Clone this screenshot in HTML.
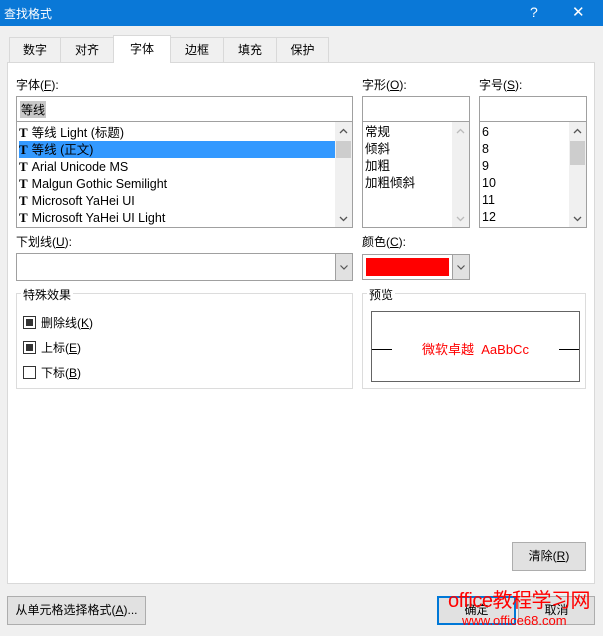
<!DOCTYPE html><html><head><meta charset="utf-8"><style>
*{margin:0;padding:0;box-sizing:border-box}
body{width:603px;height:636px;background:#f0f0f0;position:relative;overflow:hidden;font-family:"Liberation Sans","Microsoft YaHei","Noto Sans CJK SC",sans-serif;font-size:12px;color:#000}
.a{position:absolute}
.tab{position:absolute;top:37px;height:25px;border:1px solid #d9d9d9;border-bottom:none;background:#f0f0f0;text-align:center;line-height:24px}
.box{position:absolute;background:#fff;border:1px solid #a0a0a0}
.row{position:absolute;left:2px;height:17px;line-height:17px;white-space:nowrap;font-size:12.5px}
.T{font-family:"Liberation Serif",serif;font-weight:bold;font-size:13px;margin-right:4px}
.sb{position:absolute;background:#f0f0f0;width:17px}
.btn{position:absolute;background:#e1e1e1;border:1px solid #adadad;text-align:center;line-height:26px}
.cb{position:absolute;width:13px;height:13px;border:1px solid #333;background:#fff}
.cb.on::after{content:"";position:absolute;left:2px;top:2px;width:7px;height:7px;background:#333}
.grp{position:absolute;border:1px solid #dcdcdc}
.lg{position:absolute;background:#fff;padding:0 2px;top:-8px;left:4px}
u{text-decoration:underline}
svg{position:absolute}
</style></head><body>
<div class="a" style="left:0;top:0;width:603px;height:26px;background:#0a78d7;color:#fff"><span class="a" style="left:4px;top:5px;font-size:12px">查找格式</span><span class="a" style="left:530px;top:4px;font-size:14px">?</span><span class="a" style="left:572px;top:3px;font-size:15px">✕</span></div>
<div class="a" style="left:7px;top:62px;width:588px;height:522px;background:#fff;border:1px solid #d9d9d9"></div>
<div class="tab" style="left:9px;width:52px">数字</div>
<div class="tab" style="left:60px;width:54px">对齐</div>
<div class="tab" style="left:113px;width:58px;top:35px;height:28px;background:#fff;line-height:26px">字体</div>
<div class="tab" style="left:170px;width:54px">边框</div>
<div class="tab" style="left:223px;width:54px">填充</div>
<div class="tab" style="left:276px;width:53px">保护</div>
<div class="a" style="left:16px;top:76px">字体(<u>F</u>):</div>
<div class="box" style="left:16px;top:96px;width:337px;height:26px"><span class="a" style="left:3px;top:4px;background:#c8c8c8;padding:0 1px">等线</span></div>
<div class="box" style="left:16px;top:121px;width:337px;height:107px">
<div class="row" style="top:2px"><span class="T">T</span>等线 Light (标题)</div>
<div class="row" style="top:19px;width:316px;background:#3399ff;color:#000"><span class="T">T</span>等线 (正文)</div>
<div class="row" style="top:36px"><span class="T">T</span>Arial Unicode MS</div>
<div class="row" style="top:53px"><span class="T">T</span>Malgun Gothic Semilight</div>
<div class="row" style="top:70px"><span class="T">T</span>Microsoft YaHei UI</div>
<div class="row" style="top:87px"><span class="T">T</span>Microsoft YaHei UI Light</div>
<div class="sb" style="right:0;top:0;height:105px"><svg width="17" height="17" style="left:0;top:1px"><path d="M5 10l3.5-3.5 3.5 3.5" fill="none" stroke="#555" stroke-width="1.3"/></svg><div class="a" style="left:1px;top:19px;width:15px;height:17px;background:#cdcdcd"></div><svg width="17" height="17" style="left:0;top:88px"><path d="M5 7l3.5 3.5 3.5-3.5" fill="none" stroke="#555" stroke-width="1.3"/></svg></div>
</div>
<div class="a" style="left:362px;top:76px">字形(<u>O</u>):</div>
<div class="box" style="left:362px;top:96px;width:108px;height:26px"></div>
<div class="box" style="left:362px;top:121px;width:108px;height:107px">
<div class="row" style="top:2px">常规</div><div class="row" style="top:19px">倾斜</div><div class="row" style="top:36px">加粗</div><div class="row" style="top:53px">加粗倾斜</div>
<div class="sb" style="right:0;top:0;height:105px"><svg width="17" height="17" style="left:0;top:1px"><path d="M5 10l3.5-3.5 3.5 3.5" fill="none" stroke="#bbb" stroke-width="1.3"/></svg><svg width="17" height="17" style="left:0;top:88px"><path d="M5 7l3.5 3.5 3.5-3.5" fill="none" stroke="#bbb" stroke-width="1.3"/></svg></div></div>
<div class="a" style="left:479px;top:76px">字号(<u>S</u>):</div>
<div class="box" style="left:479px;top:96px;width:108px;height:26px"></div>
<div class="box" style="left:479px;top:121px;width:108px;height:107px">
<div class="row" style="top:2px">6</div><div class="row" style="top:19px">8</div><div class="row" style="top:36px">9</div><div class="row" style="top:53px">10</div><div class="row" style="top:70px">11</div><div class="row" style="top:87px">12</div>
<div class="sb" style="right:0;top:0;height:105px"><svg width="17" height="17" style="left:0;top:1px"><path d="M5 10l3.5-3.5 3.5 3.5" fill="none" stroke="#555" stroke-width="1.3"/></svg><div class="a" style="left:1px;top:19px;width:15px;height:24px;background:#cdcdcd"></div><svg width="17" height="17" style="left:0;top:88px"><path d="M5 7l3.5 3.5 3.5-3.5" fill="none" stroke="#555" stroke-width="1.3"/></svg></div></div>
<div class="a" style="left:16px;top:233px">下划线(<u>U</u>):</div>
<div class="box" style="left:16px;top:253px;width:337px;height:28px"><div class="a" style="right:0;top:0;width:17px;height:26px;background:#e1e1e1;border-left:1px solid #a0a0a0"><svg width="16" height="26" style="left:0;top:0"><path d="M4.5 11.5l3.5 3.5 3.5-3.5" fill="none" stroke="#555" stroke-width="1.2"/></svg></div></div>
<div class="a" style="left:362px;top:233px">颜色(<u>C</u>):</div>
<div class="box" style="left:362px;top:254px;width:108px;height:26px"><div class="a" style="left:3px;top:3px;width:83px;height:18px;background:#f00"></div><div class="a" style="right:0;top:0;width:17px;height:24px;background:#e1e1e1;border-left:1px solid #a0a0a0"><svg width="16" height="24" style="left:0;top:0"><path d="M4.5 10.5l3.5 3.5 3.5-3.5" fill="none" stroke="#555" stroke-width="1.2"/></svg></div></div>
<div class="grp" style="left:16px;top:293px;width:337px;height:96px"><span class="lg">特殊效果</span></div>
<div class="cb on" style="left:23px;top:316px"></div><div class="a" style="left:41px;top:314px">删除线(<u>K</u>)</div>
<div class="cb on" style="left:23px;top:341px"></div><div class="a" style="left:41px;top:339px">上标(<u>E</u>)</div>
<div class="cb" style="left:23px;top:366px"></div><div class="a" style="left:41px;top:364px">下标(<u>B</u>)</div>
<div class="grp" style="left:362px;top:293px;width:224px;height:96px"><span class="lg">预览</span></div>
<div class="a" style="left:371px;top:311px;width:209px;height:71px;border:1px solid #646464;background:#fff"><div class="a" style="left:0;top:37px;width:20px;border-top:1px solid #000"></div><div class="a" style="right:0;top:37px;width:20px;border-top:1px solid #000"></div><div class="a" style="left:0;width:100%;top:27px;text-align:center;color:#f00;font-size:13px">微软卓越&nbsp; AaBbCc</div></div>
<div class="btn" style="left:512px;top:542px;width:74px;height:29px">清除(<u>R</u>)</div>
<div class="btn" style="left:7px;top:596px;width:139px;height:29px">从单元格选择格式(<u>A</u>)...</div>
<div class="btn" style="left:437px;top:596px;width:79px;height:29px;border:2px solid #0078d7;line-height:25px">确定</div>
<div class="btn" style="left:518px;top:596px;width:77px;height:29px">取消</div>
<div class="a" style="left:448px;top:584px;color:#f00;font-size:20px;letter-spacing:-0.5px">office教程学习网</div>
<div class="a" style="left:462px;top:613px;color:#f00;font-size:13px">www.office68.com</div>
</body></html>
